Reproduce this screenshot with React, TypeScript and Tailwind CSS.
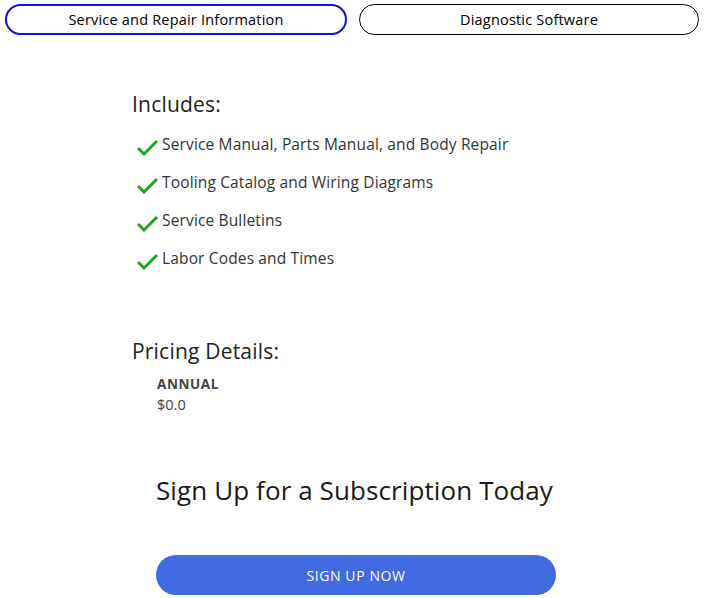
const FONT = "font-['Open_Sans','Liberation_Sans',sans-serif]";

const ITEMS = [
  "Service Manual, Parts Manual, and Body Repair",
  "Tooling Catalog and Wiring Diagrams",
  "Service Bulletins",
  "Labor Codes and Times",
];

function Check() {
  return (
    <svg width="23" height="17" viewBox="0 0 23 17" className="shrink-0">
      <path d="M2 9 L8 15 L21 2" fill="none" stroke="#1fa81f" strokeWidth="3" />
    </svg>
  );
}

export default function App() {
  return (
    <div className={`${FONT} min-h-[598px] w-[705px] bg-white text-[#222]`}>
      <div className="flex gap-3 px-[5px] pt-1">
        <button
          type="button"
          className="h-[31px] w-[342px] rounded-full border-2 border-[#1010e0] text-[14.5px] font-medium tracking-[0.2px] text-black"
        >
          Service and Repair Information
        </button>
        <button
          type="button"
          className="h-[31px] w-[340px] rounded-full border border-black text-[14.5px] font-medium tracking-[0.2px] text-black"
        >
          Diagnostic Software
        </button>
      </div>

      <div className="pl-[132px]">
        <h2 className="mt-[55px] text-[21px] leading-[28px] tracking-[0.2px]">Includes:</h2>
        <ul className="mt-[15px] space-y-[15px]">
          {ITEMS.map((item) => (
            <li
              key={item}
              className="flex items-start gap-[3px] pl-[4px] text-[15.5px] leading-[23px] tracking-[0.15px] text-[#333]"
            >
              <span className="pt-[6px]">
                <Check />
              </span>
              <span>{item}</span>
            </li>
          ))}
        </ul>

        <h2 className="mt-[67px] text-[21px] leading-[28px] tracking-[0.2px]">Pricing Details:</h2>
        <div className="mt-[10px] pl-[25px] text-[#444]">
          <div className="text-[13.5px] font-bold leading-[18px] tracking-[0.6px]">ANNUAL</div>
          <div className="mt-[2px] text-[14.5px] leading-[20px]">$0.0</div>
        </div>

        <div className="pl-[24px]">
          <h2 className="mt-[59px] text-[26px] leading-[32px] tracking-[0.1px] text-[#1a1a1a]">
            Sign Up for a Subscription Today
          </h2>
          <button
            type="button"
            className="mt-[49px] h-[40px] w-[400px] rounded-full bg-[#3f6ae0] text-[14px] tracking-[0.6px] text-white"
          >
            SIGN UP NOW
          </button>
        </div>
      </div>
    </div>
  );
}
